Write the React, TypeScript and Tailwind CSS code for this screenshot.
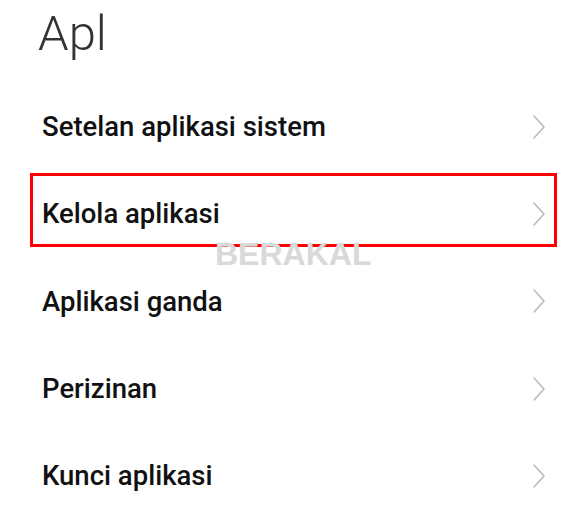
import React from "react";

const items = [
  "Setelan aplikasi sistem",
  "Kelola aplikasi",
  "Aplikasi ganda",
  "Perizinan",
  "Kunci aplikasi",
];

function Chevron() {
  return (
    <svg width="14" height="26" viewBox="0 0 14 26" fill="none">
      <path d="M2 2 L12 13 L2 24" stroke="#b8b8b8" strokeWidth="1.5" strokeLinecap="round" strokeLinejoin="round" />
    </svg>
  );
}

export default function App() {
  return (
    <div
      className="relative w-[587px] h-[509px] bg-white overflow-hidden"
      style={{ fontFamily: "Roboto, 'Liberation Sans', sans-serif" }}
    >
      <div className="h-[83px] pl-[38px] pt-[4px]">
        <div className="text-[49px] font-light leading-[60px] text-[#333333]">Apl</div>
      </div>
      <div className="flex flex-col">
        {items.map((t) => (
          <div key={t} className="h-[87.3px] flex items-center justify-between pl-[42px] pr-[41px]">
            <span className="text-[27.5px] font-medium text-[#111111]">{t}</span>
            <Chevron />
          </div>
        ))}
      </div>
      <div className="absolute left-[30px] top-[173px] w-[527px] h-[74px] border-[3px] border-[#ff0000]" />
      <div className="absolute left-[215px] top-[236px] text-[32px] font-bold text-[#d9d9d9] leading-[36px]" style={{ fontFamily: "'Liberation Sans', Arial, sans-serif" }}>
        BERAKAL
      </div>
    </div>
  );
}
